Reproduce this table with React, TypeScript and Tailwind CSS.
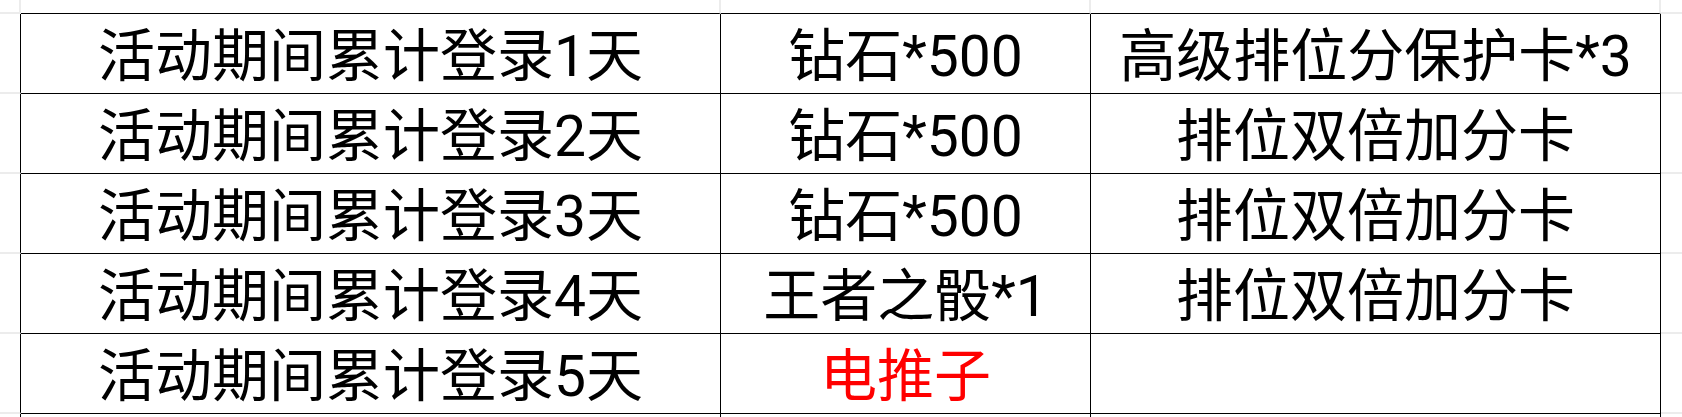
import React from 'react';

const rows: { day: string; reward: string; extra: string; red?: boolean }[] = [
    { day: '活动期间累计登录1天', reward: '钻石*500', extra: '高级排位分保护卡*3' },
    { day: '活动期间累计登录2天', reward: '钻石*500', extra: '排位双倍加分卡' },
    { day: '活动期间累计登录3天', reward: '钻石*500', extra: '排位双倍加分卡' },
    { day: '活动期间累计登录4天', reward: '王者之骰*1', extra: '排位双倍加分卡' },
    { day: '活动期间累计登录5天', reward: '电推子', extra: '', red: true },
];

const font = { fontFamily: 'Roboto, "Noto Sans CJK SC", sans-serif' };

const App: React.FC = () => {
    return (
        <div className="w-[1682px] h-[417px] bg-white overflow-hidden" style={font}>
            <div className="grid grid-cols-[21px_700px_370px_570px_1fr] grid-rows-[14px_repeat(5,80px)_1fr] h-full">
                {/* top margin row */}
                <div className="border-r-2 border-b-2 border-[#ececec]" />
                <div className="border-r-2 border-b border-r-[#ececec] border-b-black" />
                <div className="border-r-2 border-b border-r-[#ececec] border-b-black" />
                <div className="border-r-2 border-b border-r-[#ececec] border-b-black" />
                <div className="border-b-2 border-[#ececec]" />

                {rows.map((r, i) => (
                    <React.Fragment key={i}>
                        <div className="border-r border-b-2 border-r-black border-b-[#ececec]" />
                        <div className="border-r border-b border-black flex items-center justify-center text-[57px] leading-none text-black pt-[6px]">
                            {r.day}
                        </div>
                        <div
                            className={`border-r border-b border-black flex items-center justify-center text-[57px] leading-none pt-[6px] ${r.red ? 'text-[#ff0000]' : 'text-black'}`}
                        >
                            {r.reward}
                        </div>
                        <div className="border-r border-b border-black flex items-center justify-center text-[57px] leading-none text-black pt-[6px]">
                            {r.extra}
                        </div>
                        <div className="border-b-2 border-[#ececec]" />
                    </React.Fragment>
                ))}

                {/* bottom margin row */}
                <div className="border-r border-black" />
                <div className="border-r border-black" />
                <div className="border-r border-black" />
                <div className="border-r border-black" />
                <div />
            </div>
        </div>
    );
};

export default App;
